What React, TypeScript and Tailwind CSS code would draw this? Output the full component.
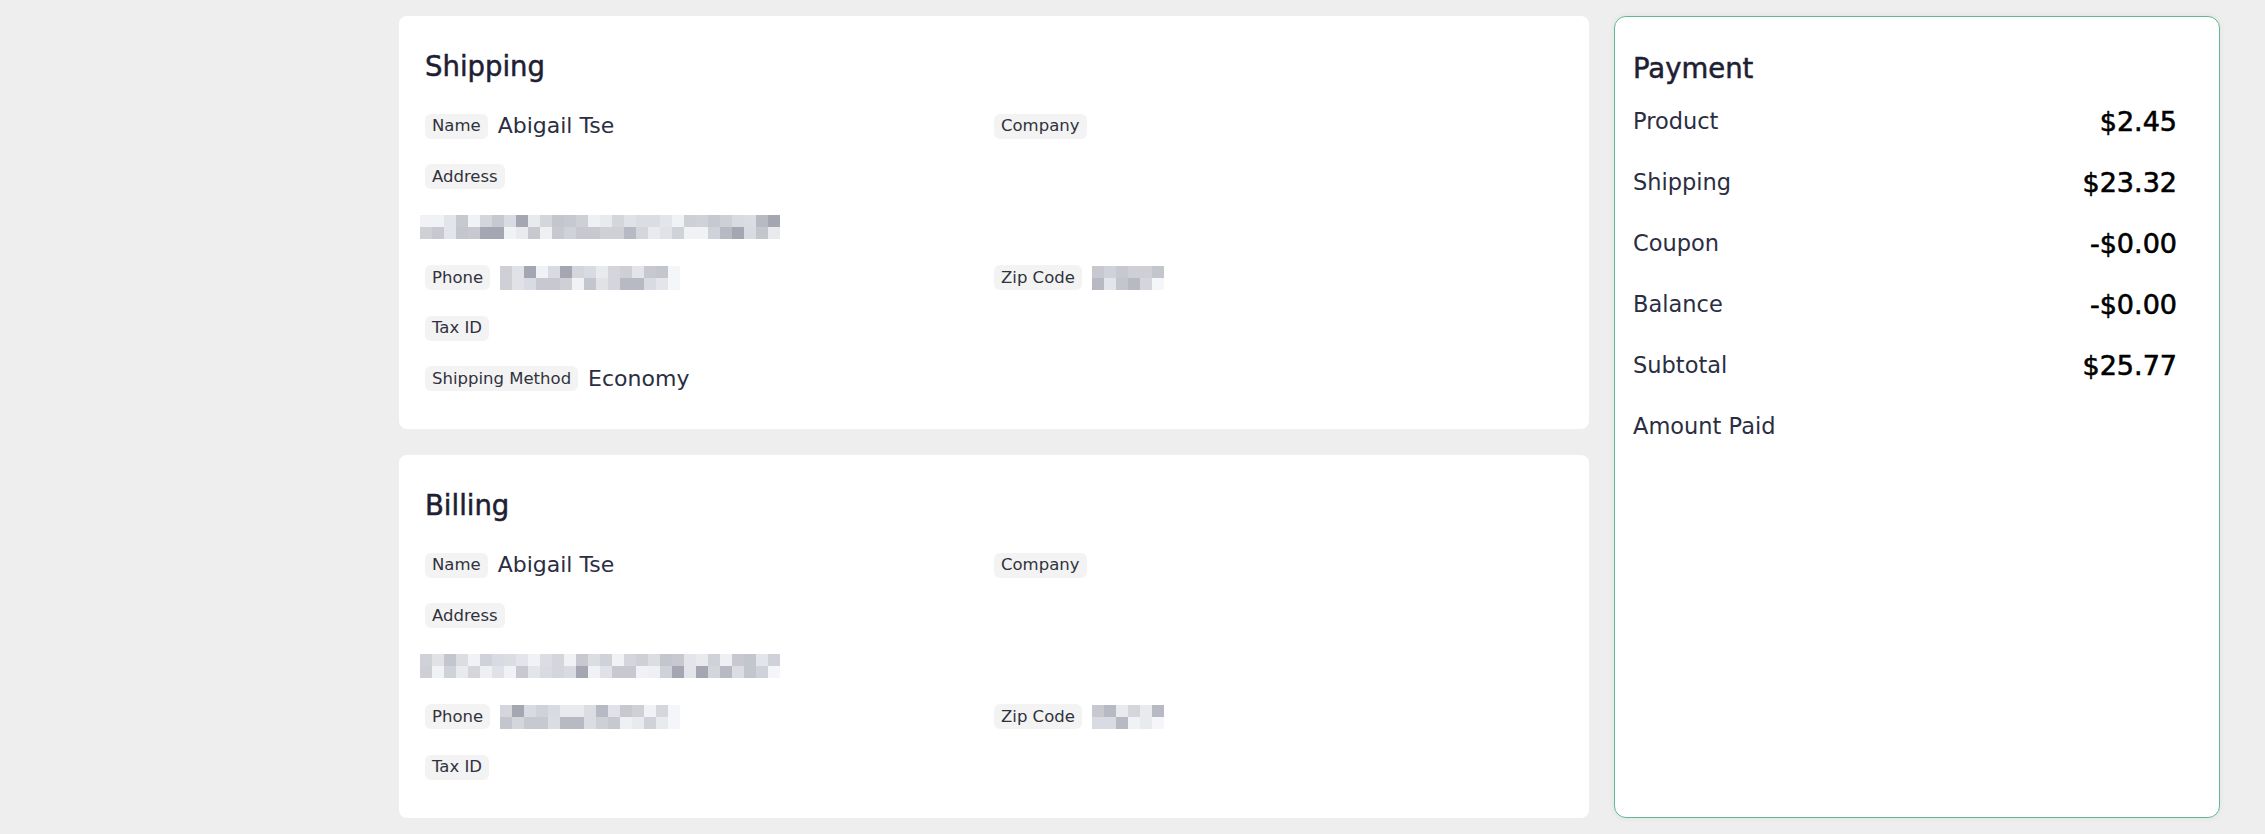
import React from "react";

const PALETTE = [
  "#e4e5ea", "#d5d6dc", "#cfd0d6", "#e9eaee", "#dcdde2", "#c8c9d0",
  "#eef0f4", "#d9dbe3", "#a4a7b2", "#b8bac3", "#e1e2e7", "#d0d2da",
  "#f1f2f5", "#c4c6ce",
];

function Mosaic({ cols, rows = 2, seed, cell = 12 }: { cols: number; rows?: number; seed: number; cell?: number }) {
  let s = seed;
  const rnd = () => {
    s = (s * 9301 + 49297) % 233280;
    return s / 233280;
  };
  const rects: React.ReactNode[] = [];
  for (let r = 0; r < rows; r++) {
    for (let c = 0; c < cols; c++) {
      const v = rnd();
      let color = PALETTE[Math.floor(v * PALETTE.length)];
      if (c === cols - 1 && rnd() > 0.4) color = "#f4f6fa";
      rects.push(<rect key={`${r}-${c}`} x={c * cell} y={r * cell} width={cell} height={cell} fill={color} />);
    }
  }
  return (
    <svg width={cols * cell} height={rows * cell} viewBox={`0 0 ${cols * cell} ${rows * cell}`} className="block shrink-0">
      {rects}
    </svg>
  );
}

function Pill({ children }: { children: React.ReactNode }) {
  return (
    <span className="inline-flex h-[25px] shrink-0 items-center rounded-md bg-[#f3f3f4] px-[7px] text-[16.5px] leading-none text-[#30323c]">
      {children}
    </span>
  );
}

function Field({ label, value }: { label: string; value?: React.ReactNode }) {
  return (
    <div className="flex h-[50.5px] items-center gap-[10px]">
      <Pill>{label}</Pill>
      {value !== undefined && (
        typeof value === "string" ? (
          <span className="text-[22px] leading-none text-[#2b2e42]">{value}</span>
        ) : (
          value
        )
      )}
    </div>
  );
}

function AddressCard({ title, seed, method }: { title: string; seed: number; method?: string }) {
  return (
    <div className="rounded-lg bg-white px-[26px] pt-[34px] pb-[25px]">
      <h2 className="mb-[19px] h-8 text-[27.5px] leading-8 text-[#1d2033] [-webkit-text-stroke:0.5px_#1d2033]">{title}</h2>
      <div className="grid grid-cols-2">
        <Field label="Name" value="Abigail Tse" />
        <Field label="Company" />
        <Field label="Address" />
        <div />
        <div className="col-span-2 flex h-[50.5px] items-center -ml-[5px]">
          <Mosaic cols={30} seed={seed} />
        </div>
        <Field label="Phone" value={<Mosaic cols={15} seed={seed + 7} />} />
        <Field label="Zip Code" value={<Mosaic cols={6} seed={seed + 13} />} />
        <Field label="Tax ID" />
        <div />
        {method && <Field label="Shipping Method" value={method} />}
      </div>
    </div>
  );
}

const PAYMENT_ROWS: [string, string][] = [
  ["Product", "$2.45"],
  ["Shipping", "$23.32"],
  ["Coupon", "-$0.00"],
  ["Balance", "-$0.00"],
  ["Subtotal", "$25.77"],
  ["Amount Paid", ""],
];

export default function App() {
  return (
    <div className="min-h-screen w-full bg-[#eeeeee] pl-[399px] pr-[45px] pt-4 pb-[17px] font-['DejaVu_Sans',sans-serif]">
      <div className="flex gap-[25px]">
        <div className="flex w-[1190px] shrink-0 flex-col gap-[26px]">
          <AddressCard title="Shipping" seed={17} method="Economy" />
          <AddressCard title="Billing" seed={91} />
        </div>
        <div className="w-[606px] shrink-0 rounded-xl border border-[#62b990] bg-white pl-[18px] pr-[42px] pt-[34px] shadow-[0_0_6px_rgba(0,0,0,0.06)]">
          <h2 className="mb-[6px] h-[34px] text-[27.5px] leading-[34px] text-[#1d2033] [-webkit-text-stroke:0.5px_#1d2033]">Payment</h2>
          {PAYMENT_ROWS.map(([label, value]) => (
            <div key={label} className="flex h-[61px] items-center justify-between">
              <span className="text-[22.5px] leading-none text-[#2b2e42]">{label}</span>
              <span className="text-[27px] leading-none text-black [-webkit-text-stroke:0.6px_#000]">{value}</span>
            </div>
          ))}
        </div>
      </div>
    </div>
  );
}
